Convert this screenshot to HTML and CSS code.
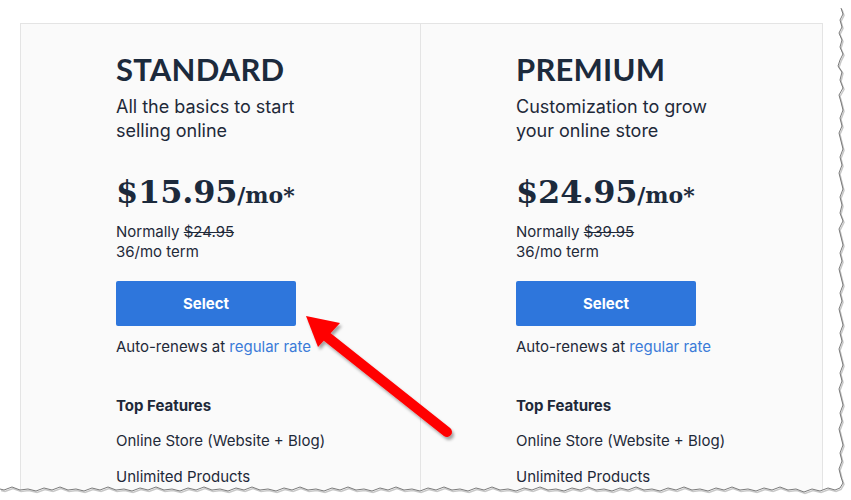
FILE: index.html
```html
<!DOCTYPE html>
<html>
<head>
<meta charset="utf-8">
<link rel="stylesheet" href="styles.css">
</head>
<body>
<div class="page">
  <div class="plans">
    <div class="plan plan-first">
      <h2 class="plan-name">STANDARD</h2>
      <p class="plan-desc">All the basics to start<br>selling online</p>
      <div class="price"><span class="amount">$15.95</span><span class="per">/mo*</span></div>
      <p class="normal">Normally <s>$24.95</s><br>36/mo term</p>
      <button class="select">Select</button>
      <p class="renew">Auto-renews at <a href="#">regular rate</a></p>
      <h3 class="features-title">Top Features</h3>
      <ul class="features">
        <li>Online Store (Website + Blog)</li>
        <li>Unlimited Products</li>
      </ul>
    </div>
    <div class="plan">
      <h2 class="plan-name">PREMIUM</h2>
      <p class="plan-desc">Customization to grow<br>your online store</p>
      <div class="price"><span class="amount">$24.95</span><span class="per">/mo*</span></div>
      <p class="normal">Normally <s>$39.95</s><br>36/mo term</p>
      <button class="select">Select</button>
      <p class="renew">Auto-renews at <a href="#">regular rate</a></p>
      <h3 class="features-title">Top Features</h3>
      <ul class="features">
        <li>Online Store (Website + Blog)</li>
        <li>Unlimited Products</li>
      </ul>
    </div>
  </div>

  <svg class="arrow" width="851" height="500" viewBox="0 0 851 500">
    <defs>
      <filter id="sh" x="-20%" y="-20%" width="140%" height="140%">
        <feDropShadow dx="2" dy="3" stdDeviation="1.5" flood-color="#000" flood-opacity="0.35"/>
      </filter>
    </defs>
    <g filter="url(#sh)">
      <line x1="447" y1="432" x2="326" y2="336" stroke="#ff0000" stroke-width="10" stroke-linecap="round"/>
      <polygon points="306,316 340,323 318,347" fill="#ff0000"/>
    </g>
  </svg>

  <svg class="torn" width="851" height="500" viewBox="0 0 851 500">
    <polygon fill="#ffffff" points="841,0 841,8 843,14 840,20 842,27 839,33 842,40 840,47 843,54 840,60 838,66 842,72 840,80 843,88 839,95 841,102 843,110 840,118 842,126 839,133 841,141 843,149 840,157 842,165 839,173 841,181 843,189 840,197 842,205 840,213 843,221 839,229 841,237 843,245 840,253 842,261 839,269 841,277 843,285 840,293 842,301 839,309 841,317 843,325 840,333 842,341 839,349 841,357 843,365 840,373 842,381 839,389 841,397 843,405 840,413 842,421 839,429 841,437 843,445 840,453 842,461 839,469 841,477 843,483 840,488 835,490 828,488 820,491 812,489 804,492 796,489 788,490 780,487 772,490 764,488 756,491 748,489 740,490 732,487 724,490 716,488 708,491 700,489 692,490 684,487 676,490 668,488 660,491 652,489 644,490 636,487 628,490 620,488 612,491 604,489 596,490 588,487 580,490 572,488 564,491 556,489 548,490 540,487 532,490 524,488 516,491 508,489 500,490 492,487 484,490 476,488 468,491 460,489 452,490 444,487 436,490 428,488 420,491 412,489 404,490 396,487 388,490 380,488 372,491 364,489 356,490 348,487 340,490 332,488 324,491 316,489 308,490 300,487 292,490 284,488 276,491 268,489 260,490 252,487 244,490 236,488 228,491 220,489 212,490 204,487 196,490 188,488 180,491 172,489 164,490 156,487 148,490 140,488 132,491 124,489 116,490 108,487 100,490 92,488 84,491 76,489 68,490 60,487 52,490 44,488 36,491 28,489 20,490 12,487 4,490 0,489 0,500 851,500 851,0"/>
    <polyline fill="none" stroke="#c8c8c8" stroke-width="1.5" transform="translate(1,1.5)" points="841,8 843,14 840,20 842,27 839,33 842,40 840,47 843,54 840,60 838,66 842,72 840,80 843,88 839,95 841,102 843,110 840,118 842,126 839,133 841,141 843,149 840,157 842,165 839,173 841,181 843,189 840,197 842,205 840,213 843,221 839,229 841,237 843,245 840,253 842,261 839,269 841,277 843,285 840,293 842,301 839,309 841,317 843,325 840,333 842,341 839,349 841,357 843,365 840,373 842,381 839,389 841,397 843,405 840,413 842,421 839,429 841,437 843,445 840,453 842,461 839,469 841,477 843,483 840,488 835,490 828,488 820,491 812,489 804,492 796,489 788,490 780,487 772,490 764,488 756,491 748,489 740,490 732,487 724,490 716,488 708,491 700,489 692,490 684,487 676,490 668,488 660,491 652,489 644,490 636,487 628,490 620,488 612,491 604,489 596,490 588,487 580,490 572,488 564,491 556,489 548,490 540,487 532,490 524,488 516,491 508,489 500,490 492,487 484,490 476,488 468,491 460,489 452,490 444,487 436,490 428,488 420,491 412,489 404,490 396,487 388,490 380,488 372,491 364,489 356,490 348,487 340,490 332,488 324,491 316,489 308,490 300,487 292,490 284,488 276,491 268,489 260,490 252,487 244,490 236,488 228,491 220,489 212,490 204,487 196,490 188,488 180,491 172,489 164,490 156,487 148,490 140,488 132,491 124,489 116,490 108,487 100,490 92,488 84,491 76,489 68,490 60,487 52,490 44,488 36,491 28,489 20,490 12,487 4,490 0,489"/>
    <polyline fill="none" stroke="#7a7a7a" stroke-width="1" points="841,8 843,14 840,20 842,27 839,33 842,40 840,47 843,54 840,60 838,66 842,72 840,80 843,88 839,95 841,102 843,110 840,118 842,126 839,133 841,141 843,149 840,157 842,165 839,173 841,181 843,189 840,197 842,205 840,213 843,221 839,229 841,237 843,245 840,253 842,261 839,269 841,277 843,285 840,293 842,301 839,309 841,317 843,325 840,333 842,341 839,349 841,357 843,365 840,373 842,381 839,389 841,397 843,405 840,413 842,421 839,429 841,437 843,445 840,453 842,461 839,469 841,477 843,483 840,488 835,490 828,488 820,491 812,489 804,492 796,489 788,490 780,487 772,490 764,488 756,491 748,489 740,490 732,487 724,490 716,488 708,491 700,489 692,490 684,487 676,490 668,488 660,491 652,489 644,490 636,487 628,490 620,488 612,491 604,489 596,490 588,487 580,490 572,488 564,491 556,489 548,490 540,487 532,490 524,488 516,491 508,489 500,490 492,487 484,490 476,488 468,491 460,489 452,490 444,487 436,490 428,488 420,491 412,489 404,490 396,487 388,490 380,488 372,491 364,489 356,490 348,487 340,490 332,488 324,491 316,489 308,490 300,487 292,490 284,488 276,491 268,489 260,490 252,487 244,490 236,488 228,491 220,489 212,490 204,487 196,490 188,488 180,491 172,489 164,490 156,487 148,490 140,488 132,491 124,489 116,490 108,487 100,490 92,488 84,491 76,489 68,490 60,487 52,490 44,488 36,491 28,489 20,490 12,487 4,490 0,489"/>
  </svg>
</div>
</body>
</html>
```

FILE: styles.css
```css
* { box-sizing: border-box; }
html, body { margin: 0; padding: 0; background: #ffffff; }
body {
  font-family: "Inter", "Lato", sans-serif;
  color: #1e2939;
  width: 851px;
  height: 500px;
  overflow: hidden;
}
.page {
  position: relative;
  width: 851px;
  height: 500px;
  padding: 23px 0 0 20px;
  overflow: hidden;
}
.plans {
  display: grid;
  grid-template-columns: 400px 401px;
  width: 803px;
  border: 1px solid #e4e4e4;
  background: #fafafa;
  height: 520px;
}
.plan {
  padding: 26px 0 0 95px;
}
.plan-first { border-right: 1px solid #e4e4e4; }
.plan-name {
  margin: 0;
  font-family: "Lato", "Inter", sans-serif;
  font-size: 31px;
  line-height: 38px;
  font-weight: 700;
  letter-spacing: 0.2px;
  color: #1c2a3c;
}
.plan-desc {
  margin: 7px 0 0;
  font-size: 18px;
  line-height: 24px;
  color: #1e2939;
}
.price {
  margin-top: 27px;
  font-family: "DejaVu Serif", "Liberation Serif", serif;
  font-weight: 700;
  color: #1c2a3c;
  line-height: 44px;
  height: 44px;
}
.amount { font-size: 32px; letter-spacing: -0.2px; }
.per { font-size: 22px; }
.normal {
  margin: 8px 0 0;
  font-size: 15px;
  line-height: 20px;
}
.normal s { text-decoration-thickness: 1px; }
.select {
  display: block;
  margin-top: 19px;
  width: 180px;
  height: 45px;
  border: 0;
  border-radius: 2px;
  background: #2e76dc;
  color: #ffffff;
  font-family: inherit;
  font-size: 15px;
  font-weight: 700;
  padding: 0;
}
.renew {
  margin: 11px 0 0;
  font-size: 15px;
  line-height: 20px;
}
.renew a { color: #3a7bd8; text-decoration: none; }
.features-title {
  margin: 39px 0 0;
  font-size: 15px;
  line-height: 20px;
  font-weight: 700;
}
.features {
  list-style: none;
  margin: 0;
  padding: 0;
}
.features li {
  margin-top: 15px;
  font-size: 15px;
  line-height: 20px;
}
.features li + li { margin-top: 16px; }
.arrow, .torn {
  position: absolute;
  left: 0;
  top: 0;
  pointer-events: none;
}
```
